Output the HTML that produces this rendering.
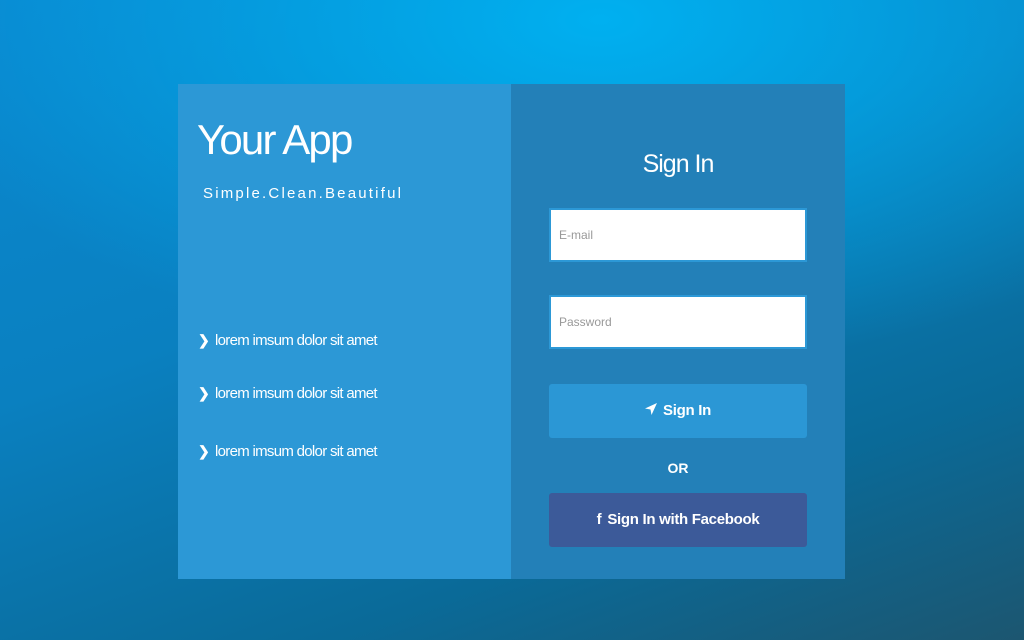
<!DOCTYPE html>
<html><head><style>
body{margin:0;width:1024px;height:640px;overflow:hidden;font-family:"Liberation Sans",sans-serif;
background:radial-gradient(ellipse 700px 350px at 600px 20px,#00b0f0 0%,rgba(0,160,225,0) 100%),
linear-gradient(160deg,#0a88d0 0%,#0a80c0 40%,#0a6a98 75%,#1c5670 100%);position:relative}
.l{position:absolute;left:178px;top:84px;width:333px;height:495px;background:#2c98d6;color:#fff}
.r{position:absolute;left:511px;top:84px;width:334px;height:495px;background:#2380b8;color:#fff}
h1{position:absolute;left:19px;top:32px;margin:0;font-weight:normal;font-size:42px;letter-spacing:-1.8px}
.sub{position:absolute;left:25px;top:101px;font-size:15px;letter-spacing:2.2px}
.li{position:absolute;left:20px;font-size:15px;letter-spacing:-0.7px}
.li b{font-size:14px;margin-right:6px}
.t{position:absolute;left:0;width:334px;text-align:center;top:66px;font-size:25px;letter-spacing:-1px}
.in{position:absolute;left:38px;height:50px;background:#fff;border:2px solid #2c98d6;color:#999;font-size:12px;line-height:50px;padding-left:8px;width:246px}
.btn{position:absolute;left:38px;width:258px;height:54px;border-radius:3px;text-align:center;line-height:54px;font-size:15px;font-weight:bold;letter-spacing:-0.3px}
</style></head><body>
<div class="l">
<h1>Your App</h1>
<div class="sub">Simple.Clean.Beautiful</div>
<div class="li" style="top:248px"><b>&#x276F;</b>lorem imsum dolor sit amet</div>
<div class="li" style="top:301px"><b>&#x276F;</b>lorem imsum dolor sit amet</div>
<div class="li" style="top:359px"><b>&#x276F;</b>lorem imsum dolor sit amet</div>
</div>
<div class="r">
<div class="t">Sign In</div>
<div class="in" style="top:124px">E-mail</div>
<div class="in" style="top:211px">Password</div>
<div class="btn" style="top:300px;background:#2b97d5"><svg width="12" height="12" viewBox="0 0 12 12" style="margin-right:6px"><path d="M12 0L0 5.5 5.5 6.5 6.5 12Z" fill="#fff"/></svg>Sign In</div>
<div style="position:absolute;top:376px;width:334px;text-align:center;font-size:14px;font-weight:bold">OR</div>
<div class="btn" style="top:409px;background:#3c5a99"><span style="margin-right:6px">f</span>Sign In with Facebook</div>
</div>
</body></html>
